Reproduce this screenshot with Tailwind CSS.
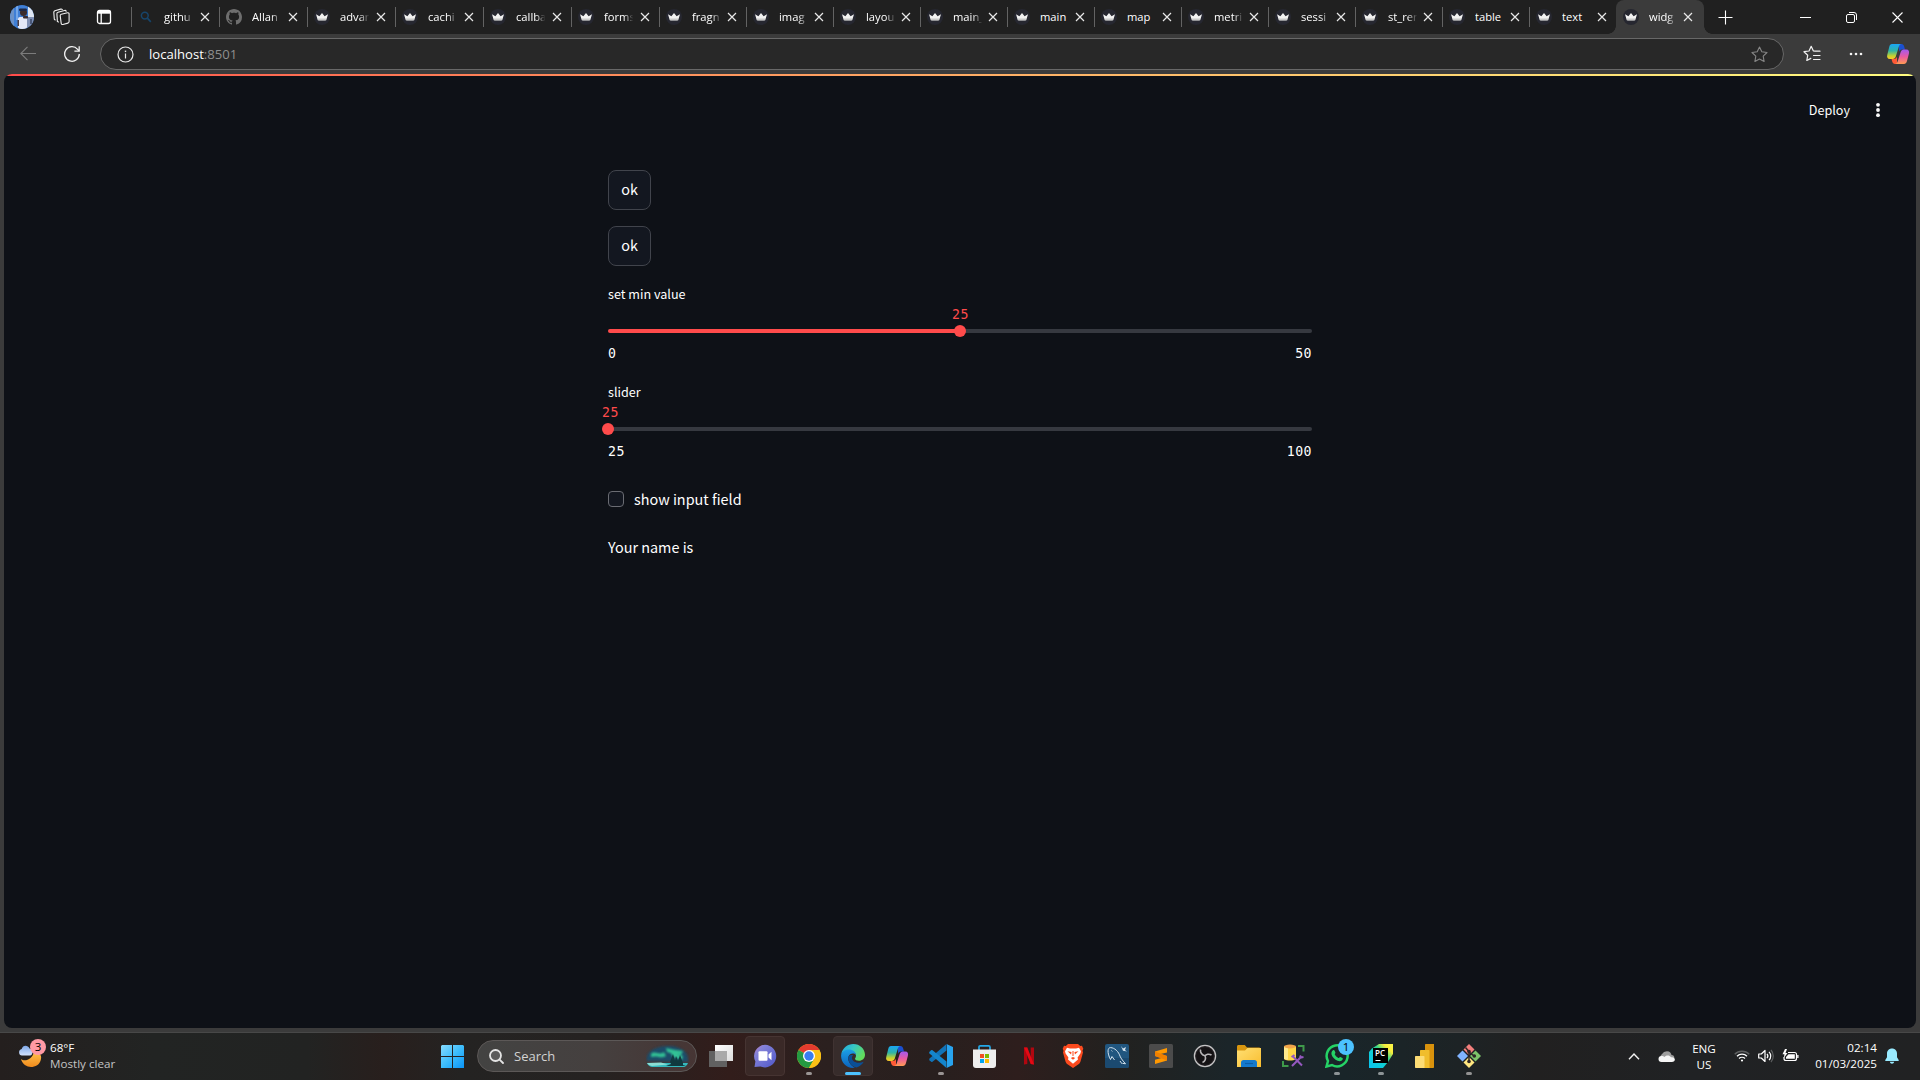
<!DOCTYPE html>
<html lang="en">
<head>
<meta charset="utf-8">
<title>widgets</title>
<script src="https://cdn.jsdelivr.net/npm/@tailwindcss/browser@4"></script>
</head>
<body class="w-[1920px] h-[1080px] overflow-hidden bg-[#3b3b3b] flex flex-col font-['Open_Sans',sans-serif] text-white">

<svg class="absolute size-0">
  <defs>
    <symbol id="crown" viewBox="0 0 16 16"><circle cx="8" cy="8" r="8" fill="#262730"/><path d="M2 5.2l3.4 2L8 4l2.6 3.2 3.4-2-1.8 6.1H3.8z" fill="#f2f2f2"/><path d="M3.8 9.4h8.4l-.6 2H4.4z" fill="#c9c9c9"/></symbol>
    <symbol id="lens" viewBox="0 0 16 16"><circle cx="6.8" cy="6.6" r="3.4" fill="none" stroke="#17456b" stroke-width="1.5"/><path d="M9.4 9.2l3.4 3.6" stroke="#17456b" stroke-width="1.7"/></symbol>
    <symbol id="github" viewBox="0 0 16 16"><path fill="#6e6e6e" d="M8 0C3.58 0 0 3.58 0 8c0 3.54 2.29 6.53 5.47 7.59.4.07.55-.17.55-.38 0-.19-.01-.82-.01-1.49-2.01.37-2.53-.49-2.69-.94-.09-.23-.48-.94-.82-1.13-.28-.15-.68-.52-.01-.53.63-.01 1.08.58 1.23.82.72 1.21 1.87.87 2.33.66.07-.52.28-.87.51-1.07-1.78-.2-3.64-.89-3.64-3.95 0-.87.31-1.59.82-2.15-.08-.2-.36-1.02.08-2.12 0 0 .67-.21 2.2.82.64-.18 1.32-.27 2-.27s1.36.09 2 .27c1.53-1.04 2.2-.82 2.2-.82.44 1.1.16 1.92.08 2.12.51.56.82 1.27.82 2.15 0 3.07-1.87 3.75-3.65 3.95.29.25.54.73.54 1.48 0 1.07-.01 1.93-.01 2.2 0 .21.15.46.55.38A8.01 8.01 0 0016 8c0-4.42-3.58-8-8-8z"/></symbol>
    <linearGradient id="cpA" x1="0" y1="0" x2="0" y2="1"><stop offset="0" stop-color="#1aa5f5"/><stop offset=".45" stop-color="#2fb4a5"/><stop offset=".8" stop-color="#c6d32e"/><stop offset="1" stop-color="#ffc62b"/></linearGradient>
    <linearGradient id="cpB" x1="0" y1="0" x2="0" y2="1"><stop offset="0" stop-color="#a259f0"/><stop offset=".5" stop-color="#ea5aa0"/><stop offset="1" stop-color="#ff9b52"/></linearGradient>
    <symbol id="copilot" viewBox="0 0 24 22">
      <path d="M13 1h2.500c1.500 0 2.300 1 2.700 2.500L19 6.500h-3c-1.700 0-2.600 1-3 2.500z" fill="#1b4fd0"/>
      <path d="M6 1h9.500c-1.500.2-2.200 1.200-2.700 2.800l-3 9.700c-.5 1.600-1.500 2.500-3 2.500H4C1.500 16 .6 14.200 1.300 11.800l2-8C3.800 2 4.500 1 6 1z" fill="url(#cpA)"/>
      <path d="M11 21H9c-1.500 0-2.400-1-2.800-2.500L5.500 16H8c1.600 0 2.600-1 3-2.500z" fill="#ff5a36"/>
      <path d="M18 21H9c1.400-.2 2.200-1.200 2.700-2.800l3-9.200c.5-1.600 1.500-2.500 3-2.500h2.500c2.600 0 3.300 1.800 2.700 4.200l-2 7.500C20.300 20 19.500 21 18 21z" fill="url(#cpB)"/>
    </symbol>
  </defs>
</svg>

<!-- tab strip -->
<header class="h-[34px] shrink-0 bg-[#202020] flex items-center">
  <div class="w-[131px] h-full shrink-0 flex items-center pl-[10px]">
    <svg class="size-6 rounded-full" viewBox="0 0 24 24"><rect width="24" height="24" fill="#3f7fd6"/><rect width="4" height="24" fill="#6b92c8"/><rect x="6" width="2" height="15" fill="#74a7e8"/><rect x="18" width="6" height="13" fill="#dfe6f2"/><rect x="17" y="12" width="7" height="12" fill="#8090b4"/><rect x="20" y="14" width="2" height="5" fill="#4a5878"/><rect x="8" y="12" width="9" height="12" rx="2" fill="#e4e8f6"/><circle cx="13.500" cy="7.500" r="3.500" fill="#3a2b2b"/><rect x="9" y="3.500" width="8" height="2.500" rx="1.200" fill="#1d2846"/><rect x="13" y="11" width="5" height="2.500" rx="1" fill="#382b2f"/><rect x="7.500" y="15" width="1.500" height="6" fill="#4a3d45"/></svg>
    <svg class="size-[18px] ml-[19px]" viewBox="0 0 18 18" fill="none" stroke="#f0f0f0" stroke-width="1.100" stroke-linejoin="round" stroke-linecap="round"><path d="M8.300 6.300l6.200-1.500c.9-.2 1.600.3 1.600 1.200v7.600c0 .8-.4 1.300-1.200 1.500l-5 1.400c-.9.200-1.600-.2-1.700-1.100L7.200 7.800c0-.8.300-1.300 1.100-1.500z"/><path d="M5.500 14l-1.100-.4-.5-7.700c-.1-.8.300-1.400 1.100-1.600l6.500-1.800c.8-.2 1.400 0 1.700.7"/><path d="M2.200 12l-.9-.8L.8 4.300C.8 3.500 1.100 3 1.900 2.700L7.700 1.100c.7-.2 1.200 0 1.600.5"/></svg>
    <svg class="size-4 ml-[25px]" viewBox="0 0 16 16" fill="none" stroke="#fff" stroke-width="1.300"><rect x="1.500" y="1.500" width="13" height="13" rx="2"/><path d="M1.500 3.200h13" stroke-width="3"/><path d="M5.200 4v10"/></svg>
  </div>
  <div id="tabs" class="flex h-full"></div>
  <div class="relative h-full w-[88px] bg-[#3b3b3b] rounded-t-lg flex items-center pl-[7px]">
    <svg class="size-4"><use href="#crown"/></svg>
    <span class="ml-[10px] w-[27px] overflow-hidden whitespace-nowrap text-[11.200px] leading-4 [mask-image:linear-gradient(to_right,black_70%,transparent)]">widg</span>
    <svg class="ml-[7px] size-[10px]" viewBox="0 0 10 10" stroke="#e8e8e8" stroke-width="1.200"><path d="M1 1l8 8M9 1l-8 8"/></svg>
    <i class="absolute -left-2 bottom-0 size-2 bg-[radial-gradient(circle_at_0_0,#202020_7.500px,#3b3b3b_8px)]"></i>
    <i class="absolute -right-2 bottom-0 size-2 bg-[radial-gradient(circle_at_100%_0,#202020_7.500px,#3b3b3b_8px)]"></i>
  </div>
  <svg class="ml-[14px] size-[15px]" viewBox="0 0 15 15" stroke="#fff" stroke-width="1.100"><path d="M7.500 .5v14M.5 7.500h14"/></svg>
  <div class="ml-auto flex items-center gap-[35px] pr-[17px]">
    <svg class="size-[11px]" viewBox="0 0 11 11" stroke="#fff"><path d="M0 5.500h11"/></svg>
    <svg class="size-[11px]" viewBox="0 0 11 11" fill="none" stroke="#fff"><rect x=".5" y="2.500" width="8" height="8" rx="1.500"/><path d="M3 .5h5a2.500 2.500 0 0 1 2.500 2.500v5"/></svg>
    <svg class="size-[11px]" viewBox="0 0 11 11" stroke="#fff" stroke-width="1.100"><path d="M.5.5l10 10M10.500.5l-10 10"/></svg>
  </div>
</header>

<!-- address bar -->
<div class="h-[40px] shrink-0 flex items-center pl-5 pr-[10px]">
  <svg class="size-4" viewBox="0 0 16 16" fill="none" stroke="#7c7c7c" stroke-width="1.100"><path d="M16 7.500H.8M7.500 .8L.8 7.500l6.700 6.700"/></svg>
  <svg class="ml-7 size-4" viewBox="0 0 16 16" fill="none" stroke="#f2f2f2" stroke-width="1.300"><path d="M15.300 8A7.300 7.300 0 1 1 13.600 3.300L15 4.900"/><path d="M15.200 .3v4.800h-4.800"/></svg>
  <div class="ml-5 w-[1684px] h-8 rounded-full border border-[#686868] bg-[#282828] flex items-center pl-4 pr-[15px]">
    <svg class="size-[17px]" viewBox="0 0 17 17" fill="none" stroke="#e8e8e8" stroke-width="1.200"><circle cx="8.500" cy="8.500" r="7.500"/><path d="M8.500 7.500v5"/><path d="M8.500 4.600v1.500" stroke-width="1.400"/></svg>
    <span class="ml-[15px] text-[13.100px] leading-5">localhost<span class="text-[#8f8f8f]">:8501</span></span>
    <svg class="ml-auto size-[17px]" viewBox="0 0 17 17" fill="none" stroke="#868686" stroke-width="1.100" stroke-linejoin="round"><path d="M8.500 1l2.300 4.800 5.200.7-3.800 3.700.9 5.300-4.600-2.500-4.600 2.500.9-5.300L1 6.500l5.200-.7z"/></svg>
  </div>
  <svg class="ml-[19px] size-[18px]" viewBox="0 0 18 18" fill="none" stroke="#f2f2f2" stroke-width="1.200" stroke-linejoin="round" stroke-linecap="round"><path d="M12 6.200l-1.600-.2L8.200 1.300 6 6l-5 .7 3.700 3.600-.9 5.200 4-2.100M12 6.200h5M10.500 10.500H17M10.500 14.500H17"/></svg>
  <svg class="ml-[27px] size-4" viewBox="0 0 16 16" fill="#f5f5f5"><circle cx="3" cy="8" r="1.300"/><circle cx="8" cy="8" r="1.300"/><circle cx="13" cy="8" r="1.300"/></svg>
  <svg class="ml-auto w-6 h-[22px]"><use href="#copilot"/></svg>
</div>

<!-- app page -->
<main class="mx-1 h-[954px] shrink-0 rounded-lg overflow-hidden bg-[#0e1117] flex flex-col font-['Noto_Sans_CJK_SC',sans-serif] text-white">
  <div class="h-[2px] bg-linear-to-r from-[#ff4b4b] to-[#fffd80]"></div>
  <div class="h-[94px] shrink-0 flex justify-end items-start pt-[22px] pr-[35px]">
    <span class="text-[12.600px] leading-6">Deploy</span>
    <svg class="ml-[25px] mt-1 w-[6px] h-4" viewBox="0 0 6 16" fill="#fafafa"><circle cx="3" cy="2.800" r="1.900"/><circle cx="3" cy="8" r="1.900"/><circle cx="3" cy="13.200" r="1.900"/></svg>
  </div>
  <div class="ml-[604px] w-[704px] flex flex-col">
    <button class="w-[43px] h-10 pb-[2px] rounded-lg border border-[#41444c] bg-[#131720] text-[14.400px] leading-5">ok</button>
    <button class="mt-4 w-[43px] h-10 pb-[2px] rounded-lg border border-[#41444c] bg-[#131720] text-[14.400px] leading-5">ok</button>

    <section class="mt-4 h-[82px]">
      <div class="h-6 text-[12.600px] leading-6">set min value</div>
      <div class="relative mt-[23px] h-1 rounded-full bg-linear-to-r from-[#ff4b4b] from-50% to-[#363940] to-50%">
        <i class="absolute left-1/2 -ml-[6px] -top-1 size-3 rounded-full bg-[#ff4b4b]"></i>
        <span class="absolute left-1/2 -ml-[8px] -top-[24px] font-['DejaVu_Sans_Mono',monospace] text-[13.200px] tracking-[.45px] leading-5 text-[#ff4b4b]">25</span>
      </div>
      <div class="mt-[11px] flex justify-between font-['DejaVu_Sans_Mono',monospace] text-[13.200px] tracking-[.45px] leading-5"><span>0</span><span>50</span></div>
    </section>

    <section class="mt-4 h-[82px]">
      <div class="h-6 text-[12.600px] leading-6">slider</div>
      <div class="relative mt-[23px] h-1 rounded-full bg-[#363940]">
        <i class="absolute -left-[6px] -top-1 size-3 rounded-full bg-[#ff4b4b]"></i>
        <span class="absolute -left-[6px] -top-[24px] font-['DejaVu_Sans_Mono',monospace] text-[13.200px] tracking-[.45px] leading-5 text-[#ff4b4b]">25</span>
      </div>
      <div class="mt-[11px] flex justify-between font-['DejaVu_Sans_Mono',monospace] text-[13.200px] tracking-[.45px] leading-5"><span>25</span><span>100</span></div>
    </section>

    <label class="mt-[25px] h-6 flex items-center"><i class="size-4 rounded border border-[#6a6c73] bg-[#131720]"></i><span class="ml-[10px] text-[14.400px] leading-6">show input field</span></label>
    <p class="mt-6 text-[14.400px] leading-6">Your name is</p>
  </div>
</main>

<!-- taskbar -->
<footer class="mt-1 h-12 pb-px shrink-0 border-t border-[#484848] flex items-center bg-[linear-gradient(90deg,#241f1e_0%,#222423_8%,#222322_16%,#281f1d_20%,#242322_24%,#252221_31%,#321d1b_38%,#2b201f_43%,#281f1e_49%,#2e1e1d_53%,#22211f_58%,#1b2529_64%,#192529_70%,#1d2325_76%,#212020_80%,#202224_88%,#212223_100%)]">
  <div class="w-[421px] shrink-0 flex items-center pl-[17px]">
    <div class="relative -mt-[2px] w-[30px] h-8">
      <svg class="size-full" viewBox="0 0 30 32"><defs><linearGradient id="moon" x1="0" y1="0" x2="0" y2="1"><stop offset="0" stop-color="#ffc650"/><stop offset="1" stop-color="#f08a1c"/></linearGradient><linearGradient id="cld" x1="0" y1="0" x2="0" y2="1"><stop offset="0" stop-color="#7ea8e8"/><stop offset="1" stop-color="#d3e2fb"/></linearGradient></defs><path d="M4 20c3 3 12 1 13-8 5 1 8 4 7 8-1 6-6 8-10 8S5 25 4 20z" fill="url(#moon)"/><path d="M5 16.500a3.300 3.300 0 0 1-.3-6.500C5.500 5.800 11 5.500 12.500 9.500c4 .3 3.800 7 .5 7z" fill="url(#cld)"/></svg>
      <span class="absolute left-[13px] top-0 size-4 rounded-full bg-[#ff99a4] text-black text-[11.500px] leading-4 text-center">3</span>
    </div>
    <div class="ml-[3px] text-[11.650px] leading-4"><div>68°F</div><div class="text-[#c4c4c4]">Mostly clear</div></div>
  </div>

  <svg class="size-[23px] shrink-0 ml-5" viewBox="0 0 23 23"><defs><linearGradient id="win" x1="0" y1="0" x2="1" y2="1"><stop offset="0" stop-color="#86dcff"/><stop offset=".5" stop-color="#3dbdfb"/><stop offset="1" stop-color="#0a94f7"/></linearGradient></defs><path fill="url(#win)" d="M1 0h10v11H0V1zM12 0h10l1 1v10H12zM0 12h11v11H0zM12 12h11v11H12z"/></svg>

  <div class="ml-[13px] w-[220px] h-8 shrink-0 rounded-full border border-[#5c5857] bg-[linear-gradient(90deg,#434342,#45403f_55%,#463534)] flex items-center pl-[11px] pr-[7px]">
    <svg class="size-[15px]" viewBox="0 0 15 15" fill="none" stroke="#e4e4e4" stroke-width="1.800" stroke-linecap="round"><circle cx="6.500" cy="6.500" r="5.500" fill="#5b5b5b"/><path d="M10.600 10.600L14 14"/></svg>
    <span class="ml-[10px] pb-px text-[13px] leading-5 text-[#d2d2d2]">Search</span>
    <svg class="ml-auto w-[43px] h-6" viewBox="0 0 43 24"><defs><filter id="soft" x="-30%" y="-30%" width="160%" height="160%"><feGaussianBlur stdDeviation="1.100"/></filter></defs><path d="M1 17C-1 9 7 3 20 2c12-1 24 5 22 16z" fill="#1d4b68" filter="url(#soft)"/><path d="M5 10c4-4 8 2 13-2l2 4c-5 3-8-1-15 1zM20 4l9 2 8 1-2 4-7-1-7-2zM25 9l12 3-1 4-9-3z" fill="#31c295" filter="url(#soft)"/><path d="M1 19h41c-1 2-2 3.500-4 4H6c-3-.5-4-2-5-4z" fill="#35b9bd"/><path d="M1 19l14-.5 7 2L6 22c-3-.5-4-2-5-3z" fill="#8bded4"/><path d="M20 22l5-2-1-2 3-8 2 7 1-5 2 5 2-6 3 8v2l3 1z" fill="#103a3f"/></svg>
  </div>

  <div class="flex items-center ml-[2px] h-full">
    <div class="w-11 h-10 flex items-center justify-center"><svg class="w-6 h-[22px]" viewBox="0 0 24 22"><defs><linearGradient id="tv" x1="0" y1="0" x2="1" y2="1"><stop offset="0" stop-color="#fff"/><stop offset="1" stop-color="#dcdcdc"/></linearGradient></defs><path d="M6 0h18v16H6z" fill="url(#tv)"/><path d="M0 6h18v16H0z" fill="#616161"/><path d="M6 6h12v10H6z" fill="#a9a9a9"/></svg></div>
    <div class="w-10 mx-0.5 h-10 rounded border border-[#463432] bg-[#3a2927] flex items-center justify-center"><svg class="size-6" viewBox="0 0 24 24"><defs><linearGradient id="ch" x1="0" y1="0" x2="1" y2="1"><stop offset="0" stop-color="#c47ac0"/><stop offset=".25" stop-color="#8382d8"/><stop offset="1" stop-color="#4f57c9"/></linearGradient></defs><path d="M12 .8a11.300 11.300 0 1 1-4.500 21.700L1.500 23l.9-5.500A11.300 11.300 0 0 1 12 .8z" fill="url(#ch)"/><rect x="5.500" y="7.200" width="9" height="9.600" rx="1" fill="#fff"/><path d="M15.500 10.500l3-2.800v8.600l-3-2.800z" fill="#fff"/></svg></div>
    <div class="relative w-11 h-10 flex items-center justify-center"><svg class="size-6" viewBox="0 0 24 24"><circle cx="12" cy="12" r="12" fill="#fbc116"/><path d="M12 12L1.600 6A12 12 0 0 1 22.400 6z" fill="#e33b2e"/><path d="M1.600 6A12 12 0 0 0 12 24l5.200-9z" fill="#249a41"/><path d="M12 6h10.400A12 12 0 0 1 12 24l5.200-9z" fill="#fbc116"/><circle cx="12" cy="12" r="6" fill="#fff"/><circle cx="12" cy="12" r="4.700" fill="#3a7df0"/></svg><i class="absolute bottom-[1px] w-[6px] h-[3px] rounded-full bg-[#9a9594]"></i></div>
    <div class="relative w-10 mx-0.5 h-10 rounded border border-[#403332] bg-[#372c2b] flex items-center justify-center"><svg class="size-6" viewBox="0 0 24 24"><defs><linearGradient id="e1" x1="0" y1="0" x2="1" y2=".5"><stop offset="0" stop-color="#1ea5e4"/><stop offset=".5" stop-color="#38c9c2"/><stop offset="1" stop-color="#62dc5c"/></linearGradient><linearGradient id="e2" x1="0" y1="0" x2="0" y2="1"><stop offset="0" stop-color="#1c9fe6"/><stop offset="1" stop-color="#0b63bd"/></linearGradient></defs><path d="M.3 10C1.500 4 6.500 0 12.300 0 19 0 24 5 24 10.800c0 3.700-2.700 6-6 6-2.300 0-4-.8-4-2 0-.8 1-1.200 1-3C15 9 12.500 7 9.500 7 5 7 1.500 8 .3 10z" fill="url(#e1)"/><path d="M.1 12C.1 8 3.600 5.500 8 5.500c4 0 6.600 2.300 7 5.500-2-2.500-6.500-1.600-7.500 1.500-1.300 4.500 2 9 6.500 11.300C6 25 .1 19 .1 12z" fill="url(#e2)"/><path d="M7.500 12.500C6.500 18 11 23 15.500 23.400 19 22.300 21.500 20 22.700 17.700c-5 2.300-11 .7-11.700-3.200-.2-1.500.4-2.700 1.200-3.500-2.200-.3-4.200.3-4.700 1.500z" fill="#0a4f97"/></svg><i class="absolute bottom-0 w-4 h-[3px] rounded-full bg-[#4cc2ff]"></i></div>
    <div class="w-11 h-10 flex items-center justify-center"><svg class="w-6 h-[22px]"><use href="#copilot"/></svg></div>
    <div class="relative w-11 h-10 flex items-center justify-center"><svg class="size-6" viewBox="0 0 24 24"><path d="M17.500 0v6.500L3.500 17.700c-.4.300-.9.300-1.300 0L.5 16.200c-.5-.5-.5-1.100 0-1.600z" fill="#1173b8"/><path d="M17.500 24v-6.500L3.500 6.300c-.4-.3-.9-.3-1.300 0L.5 7.800c-.5.500-.5 1.100 0 1.600z" fill="#1485cc"/><path d="M17.500 0L24 3v18l-6.500 3c.5-.3.500-.8.500-1.500V1.500c0-.7 0-1.200-.5-1.500z" fill="#28a3ee"/></svg><i class="absolute bottom-[1px] w-[6px] h-[3px] rounded-full bg-[#9a9594]"></i></div>
    <div class="w-11 h-10 flex items-center justify-center"><svg class="size-6" viewBox="0 0 24 24"><path d="M6 6.500V3.200c0-.8.500-1.400 1.400-1.400h8.200c.9 0 1.400.6 1.400 1.400v3.300" fill="none" stroke="#24a8e8" stroke-width="1.700"/><path d="M0 5.500h23V21c0 1.800-1 3-3 3H3c-2 0-3-1.200-3-3z" fill="#eeeeee"/><path d="M7 10h4v4H7z" fill="#f25022"/><path d="M12 10h4v4h-4z" fill="#7fba00"/><path d="M7 15h4v4H7z" fill="#00a4ef"/><path d="M12 15h4v4h-4z" fill="#ffb900"/></svg></div>
    <div class="w-11 h-10 flex items-center justify-center"><svg class="size-6" viewBox="0 0 24 24"><path d="M7 3.500h3.300V20L7 20.500zM13.700 3.500H17v17l-3.300-.5z" fill="#b00710"/><path d="M7 3.500h3.300L17 20.500l-3.300-.5z" fill="#e50914"/></svg></div>
    <div class="w-11 h-10 flex items-center justify-center"><svg class="size-6" viewBox="0 0 24 24"><path d="M7 0h10l2.200 2 1.800-.2 1.300 3-.8 2 .5 1.700-2.500 9c-.4 1.300-1 2-2 2.800L12 24l-5.500-3.700c-1-.8-1.600-1.500-2-2.800L2 8.500l.5-1.700-.8-2L3 1.800l1.800.2z" fill="#fb4a1e"/><path d="M6 3.800l3 .6h6l3-.6 2 3.400-.6 2.300-2.800 4 .4 2L12 19.800 7 15.500l.4-2-2.800-4L4 7.200z" fill="#fff"/><path d="M6.500 7.200l4 .9-.4 2.400zM17.500 7.200l-4 .9.400 2.400zM9.800 14l2.200-1 2.200 1-2.200 1.800zM11.500 7h1v5h-1z" fill="#fb4a1e"/></svg></div>
    <div class="w-11 h-10 flex items-center justify-center"><svg class="size-6" viewBox="0 0 24 24"><rect width="24" height="24" rx="2" fill="#21567f"/><path d="M0 14h24v8a2 2 0 0 1-2 2H2a2 2 0 0 1-2-2z" fill="#1b4a70"/><path d="M5.500 15.500C3 11 2 5 4.500 3.800c3-1 8 2.200 10 7 1 3 2.500 5 6 9l-3-.5M5.500 15.500l1.500-3 2.500 3.500M15 17l2 2.800M6.500 6.500l.8.900" fill="none" stroke="#d7e4ee" stroke-width="1"/><path d="M16 2l2 2.500L21 3l-1 3 2 1.500-4-.8z" fill="#d7e4ee"/></svg></div>
    <div class="w-11 h-10 flex items-center justify-center"><svg class="size-6" viewBox="0 0 24 24"><rect width="24" height="24" rx="1.500" fill="#4b4b4b"/><path d="M18 4v4.400L11.500 10l6.500 2v4.500L6 20v-4.300l6.500-1.800L6 12V7.500z" fill="#ff9800"/><path d="M6 7.500V12l12 4.500V12z" fill="#f08000"/></svg></div>
    <div class="w-11 h-10 flex items-center justify-center"><svg class="size-6" viewBox="0 0 24 24"><circle cx="12" cy="12" r="10.600" fill="#252225" stroke="#c4c3c4" stroke-width="1.300"/><circle cx="12" cy="12" r="8.800" fill="#141214"/><path d="M7.500 5.500c-.5 3 1.500 5.800 4.500 6.300M18.500 11c-2.500-1.500-5.500-.8-6.500 1.200M9.500 18.500c2.700-1 3.800-4 2.500-6.500" fill="none" stroke="#b7b5b7" stroke-width="1.600"/></svg></div>
    <div class="w-11 h-10 flex items-center justify-center"><svg class="size-6" viewBox="0 0 24 24"><defs><linearGradient id="fo" x1="0" y1="0" x2="1" y2="1"><stop offset="0" stop-color="#ffdf73"/><stop offset="1" stop-color="#f9bd2e"/></linearGradient></defs><path d="M0 2.500C0 1.600.6 1 1.500 1h6.300L10 3.500h12.500L24 5v4H0z" fill="#d8960f"/><path d="M0 6.500h8L10.500 4H24v19H0z" fill="url(#fo)"/><path d="M4 23v-4.500C4 17 5 16 6.500 16h11c1.500 0 2.500 1 2.500 2.500V23z" fill="#1479cc"/><path d="M8 19.500h8" stroke="#0b5ea8" stroke-width="1.200"/></svg></div>
    <div class="w-11 h-10 flex items-center justify-center"><svg class="size-6" viewBox="0 0 24 24"><path d="M17 2h5.500v5.500M2 17v5h5.500" fill="none" stroke="#3f9a4a" stroke-width="2"/><path d="M3 2.500h12V15c-3 2-9 2-12 0z" fill="#ffd748"/><path d="M3 2.500h4v13.300c-1.600-.1-3-.3-4-.8z" fill="#ffe98c"/><ellipse cx="9" cy="2.500" rx="6" ry="1.900" fill="#f2a54a"/><path d="M11 22l9-9M12 12.500l9 9M10.500 13l3-2M19 11.500l1 2 2.500-.5" fill="none" stroke="#9558c0" stroke-width="2"/></svg></div>
    <div class="relative w-11 h-10 flex items-center justify-center"><svg class="size-6" viewBox="0 0 24 24"><path d="M1.500 22.500L3 17A10.500 10.500 0 1 1 7 21z" fill="none" stroke="#25d366" stroke-width="2.500"/><path d="M8 6.300c.6-.5 1.200-.3 1.500.3l.9 2c.2.500-.8 1.400-.6 1.900.8 1.600 2 2.700 3.600 3.500.6.200 1.300-1.200 1.900-1l2.100 1c.5.300.5.900.2 1.500-1 1.800-3 2-5 1.200-3-1.200-5-3.200-6-6-.5-1.800.2-3.500 1.400-4.400z" fill="#25d366"/></svg><span class="absolute left-[23px] top-[3px] size-4 rounded-full bg-[#4cc2ff] text-black text-[11.500px] leading-4 text-center">1</span><i class="absolute bottom-[1px] w-[6px] h-[3px] rounded-full bg-[#8d9496]"></i></div>
    <div class="relative w-11 h-10 flex items-center justify-center"><svg class="size-6" viewBox="0 0 24 24"><defs><linearGradient id="pc" x1="0" y1="1" x2="1" y2="0"><stop offset="0" stop-color="#08c3f2"/><stop offset=".4" stop-color="#10cfd5"/><stop offset=".6" stop-color="#32d789"/><stop offset=".8" stop-color="#f8ec3c"/><stop offset="1" stop-color="#fcf84a"/></linearGradient></defs><path d="M0 8l3-3.500L10 0h14v10l-5 8-5 6H0z" fill="url(#pc)"/><path d="M4 4h15v15H4z" fill="#000"/><path d="M6.500 16.500h5" stroke="#fff" stroke-width="1"/><text x="6" y="12.300" font-size="8" font-weight="600" fill="#fff" font-family="Open Sans, sans-serif">PC</text></svg><i class="absolute bottom-[1px] w-[6px] h-[3px] rounded-full bg-[#8d9496]"></i></div>
    <div class="w-11 h-10 flex items-center justify-center"><svg class="size-6" viewBox="0 0 24 24"><path d="M12 1c0-.6.400-1 1-1h8v23c0 .6-.4 1-1 1h-8z" fill="#d9920c"/><path d="M7 7c0-.6.400-1 1-1h7.500c.6 0 1 .4 1 1v17H7z" fill="#f0bd2c"/><path d="M2 13c0-.6.400-1 1-1h7.500c.6 0 1 .4 1 1v11H3c-.6 0-1-.4-1-1z" fill="#fcdc75"/></svg></div>
    <div class="relative w-11 h-10 flex items-center justify-center"><svg class="size-6" viewBox="0 0 24 24"><path d="M12 0l5.500 5.500L12 11 6.500 5.500z" fill="#f37f7c"/><path d="M5.500 6.500L11 12l-5.500 5.500L0 12z" fill="#80b3ff"/><path d="M18.500 6.500L24 12l-5.500 5.500L13 12z" fill="#7dc36a"/><path d="M12 13l5.500 5.500L12 24l-5.500-5.500z" fill="#ffe680"/><path d="M8.500 3.500L12 7.500v10M12 8l5 4" fill="none" stroke="#2d2525" stroke-width="1.500"/><circle cx="12" cy="7.500" r="1.800" fill="#2d2525"/><circle cx="12" cy="17.500" r="1.800" fill="#2d2525"/><circle cx="17.300" cy="12" r="1.800" fill="#2d2525"/></svg><i class="absolute bottom-[1px] w-[6px] h-[3px] rounded-full bg-[#929292]"></i></div>
  </div>

  <div class="ml-auto flex items-center pr-[21px] text-[11.650px] leading-4 shrink-0">
    <svg class="w-3 h-[7px]" viewBox="0 0 12 7" fill="none" stroke="#f2f2f2" stroke-width="1.400"><path d="M1 6.200L6 1l5 5.200"/></svg>
    <svg class="ml-[18px] w-[17px] h-[11px]" viewBox="0 0 17 11"><path d="M3.500 8A3.300 3.300 0 0 1 3 4C5 2.500 5.500.3 9 .2c3 0 4.200 2 4.500 3.800 4 .3 3.500 5 0 6z" fill="#9d9d9d"/><path d="M3.500 11a3 3 0 0 1 0-6c1.500 0 2 .4 3 1 2-2 5-2 6.500.3 5-.6 5 4.700.8 4.700z" fill="#f5f5f5"/></svg>
    <div class="ml-[17px] pt-px w-6 flex flex-col items-center whitespace-nowrap"><span>ENG</span><span>US</span></div>
    <svg class="ml-[18px] w-4 h-3" viewBox="0 0 16 12" fill="none" stroke="#fff" stroke-width="1.300"><path d="M.7 4.200a10.500 10.500 0 0 1 14.600 0" stroke="#5e6061"/><path d="M3 6.300a7 7 0 0 1 10 0M5 8.500a4.300 4.300 0 0 1 6 0"/><circle cx="8" cy="10.500" r="1.100" fill="#fff" stroke="none"/></svg>
    <svg class="ml-2 w-4 h-[14px]" viewBox="0 0 16 14" fill="none" stroke="#fff" stroke-width="1.200" stroke-linejoin="round"><path d="M.7 5h2.600L7 1.500v11L3.300 9H.7zM9 4.800a3.500 3.500 0 0 1 0 4.400M11 2.800a6 6 0 0 1 0 8.400"/><path d="M13 1a9 9 0 0 1 0 12" stroke="#5e6061"/></svg>
    <svg class="ml-2 w-[17px] h-[14px]" viewBox="0 0 17 14"><path d="M6 3.500h6.500c1.200 0 2 .8 2 2v4c0 1.200-.8 2-2 2H4c-1.200 0-2-.8-2-2V8" fill="none" stroke="#fff" stroke-width="1.200"/><path d="M6.500 5.300h6.300v4.500H4V8z" fill="#fff"/><path d="M15.200 6h1.300v3h-1.300zM3 0L.5 5.200h2L1.800 9 5.500 4h-2L5 0z" fill="#fff"/></svg>
    <div class="ml-[11px] w-[67px] flex flex-col items-end whitespace-nowrap"><span>02:14</span><span>01/03/2025</span></div>
    <svg class="ml-[8px] w-[14px] h-4" viewBox="0 0 14 16" fill="#99ebff"><path d="M7 .5c3 0 5 2.200 5 5v3.800l1.700 2.700c.2.500 0 1-.6 1H.9c-.6 0-.8-.5-.6-1L2 9.300V5.500c0-2.800 2-5 5-5zM4.800 13.800h4.400c-.3 1.200-1.100 1.900-2.200 1.900s-1.900-.7-2.200-1.900z"/></svg>
  </div>
</footer>

<script>
  const names = ['githu', 'Allan', 'advar', 'cachi', 'callba', 'forms', 'fragn', 'imag', 'layou', 'main_', 'main', 'map', 'metri', 'sessi', 'st_rer', 'table', 'text'];
  document.getElementById('tabs').innerHTML = names.map((n, i) => `
    <div class="${i < 6 ? 'w-[88px]' : 'w-[87px]'} h-full flex items-center">
      <i class="w-px h-5 bg-[#636363]"></i>
      <svg class="ml-[6px] size-4"><use href="#${i === 0 ? 'lens' : i === 1 ? 'github' : 'crown'}"/></svg>
      <span class="ml-[10px] w-[30px] overflow-hidden whitespace-nowrap text-[11.200px] leading-4 ${['main', 'map', 'table', 'text'].includes(n) ? '' : '[mask-image:linear-gradient(to_right,black_65%,transparent_98%)]'}">${n}</span>
      <svg class="${i < 6 ? 'ml-[5.500px]' : 'ml-[4.500px]'} size-[10px]" viewBox="0 0 10 10" stroke="#e8e8e8" stroke-width="1.200"><path d="M1 1l8 8M9 1l-8 8"/></svg>
    </div>`).join('');
</script>
</body>
</html>
